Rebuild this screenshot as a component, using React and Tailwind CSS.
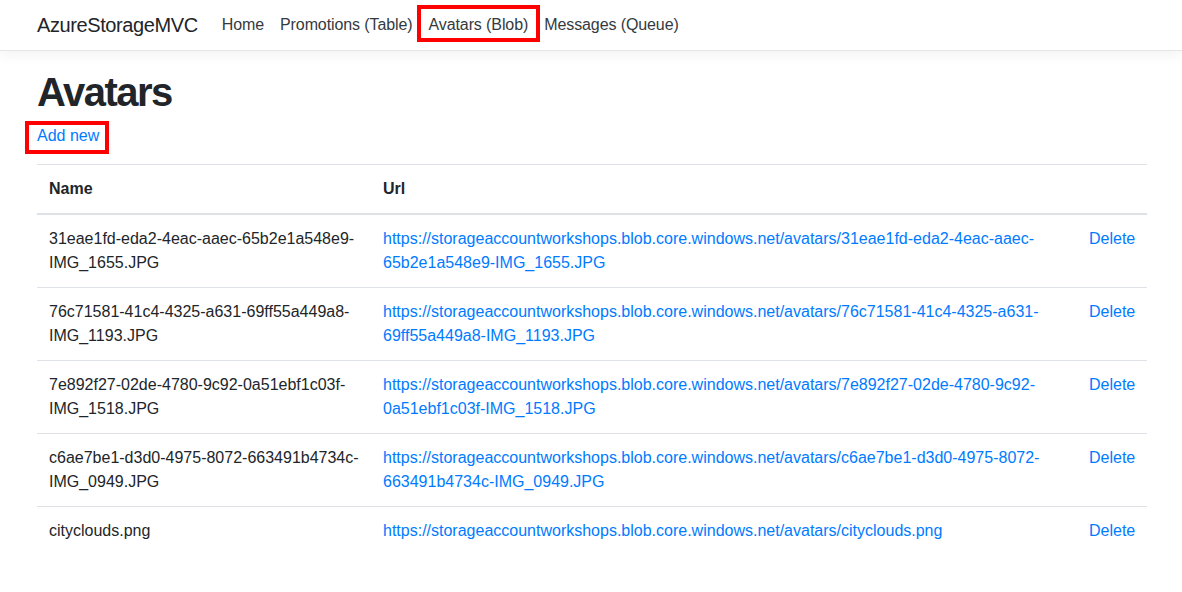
import React from 'react';

const BASE = 'https://storageaccountworkshops.blob.core.windows.net/avatars/';

const avatars = [
  '31eae1fd-eda2-4eac-aaec-65b2e1a548e9-IMG_1655.JPG',
  '76c71581-41c4-4325-a631-69ff55a449a8-IMG_1193.JPG',
  '7e892f27-02de-4780-9c92-0a51ebf1c03f-IMG_1518.JPG',
  'c6ae7be1-d3d0-4975-8072-663491b4734c-IMG_0949.JPG',
  'cityclouds.png',
];

// red annotation frame drawn over the screenshot
const Highlight = ({ className }) => (
  <span className={`pointer-events-none absolute border-4 border-[#ff0000] ${className}`} />
);

const NavLink = ({ children, active }) => (
  <a href="#" className="px-2 text-[16px] leading-6 tracking-[-0.1px] text-[#343a40]">
    <span className="relative">
      {children}
      {active && <Highlight className="-top-[11px] -bottom-[9px] -left-[12px] -right-[12px]" />}
    </span>
  </a>
);

const App = () => {
  return (
    <div className="min-h-[592px] bg-white text-[#212529] font-['Liberation_Sans',Arial,sans-serif] text-[16px] leading-6">
      <header className="h-[51px] bg-white border-b border-[#e5e5e5] shadow-[0_4px_12px_rgba(0,0,0,0.05)]">
        <nav className="h-full pl-[37px] flex items-center">
          <a href="#" className="text-[20px] leading-[30px] tracking-[-0.4px] text-[#212529] mr-[16px]">AzureStorageMVC</a>
          <NavLink>Home</NavLink>
          <NavLink>Promotions (Table)</NavLink>
          <NavLink active>Avatars (Blob)</NavLink>
          <NavLink>Messages (Queue)</NavLink>
        </nav>
      </header>

      <main className="mt-[17px] pl-[37px]">
        <div className="w-[1110px]">
          <h1 className="text-[40px] leading-[48px] font-bold tracking-[-1.5px] mb-2">Avatars</h1>
          <p className="mb-4">
            <a href="#" className="relative text-[#007bff]">
              Add new
              <Highlight className="-top-[6px] -bottom-[10px] -left-[12px] -right-[10px]" />
            </a>
          </p>

          <table className="w-full table-fixed">
            <colgroup>
              <col className="w-[334px]" />
              <col className="w-[706px]" />
              <col className="w-[70px]" />
            </colgroup>
            <thead>
              <tr className="border-t border-b-2 border-[#dee2e6]">
                <th className="p-3 text-left font-bold align-bottom">Name</th>
                <th className="p-3 text-left font-bold align-bottom">Url</th>
                <th className="p-3"></th>
              </tr>
            </thead>
            <tbody>
              {avatars.map((name, i) => (
                <tr key={name} className={i > 0 ? 'border-t border-[#dee2e6]' : ''}>
                  <td className="p-3 align-top">{name}</td>
                  <td className="p-3 align-top">
                    <a href="#" className="text-[#007bff]">{BASE + name}</a>
                  </td>
                  <td className="p-3 align-top">
                    <a href="#" className="text-[#007bff]">Delete</a>
                  </td>
                </tr>
              ))}
            </tbody>
          </table>
        </div>
      </main>
    </div>
  );
};

export default App;
